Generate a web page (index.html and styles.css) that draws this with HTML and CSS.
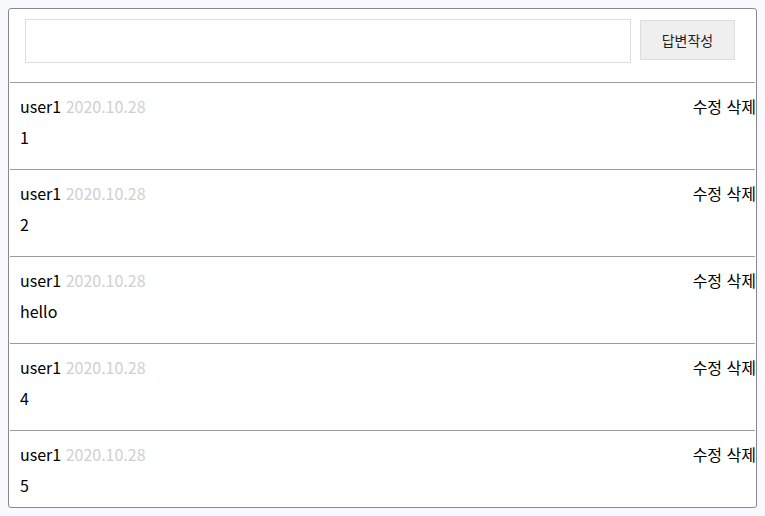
FILE: index.html
```html
<!DOCTYPE html>
<html lang="ko">
<head>
<meta charset="utf-8">
<title>댓글</title>
<link rel="stylesheet" href="styles.css">
</head>
<body>
<div class="board">
  <div class="write">
    <input class="write-input" type="text">
    <button class="write-btn" type="button">답변작성</button>
  </div>
  <div class="divider"></div>
  <div class="reply">
    <div class="reply-head">
      <div class="reply-meta"><span class="reply-user">user1</span> <span class="reply-date">2020.10.28</span></div>
      <div class="reply-actions">수정 삭제</div>
    </div>
    <div class="reply-body">1</div>
  </div>
  <div class="divider"></div>
  <div class="reply">
    <div class="reply-head">
      <div class="reply-meta"><span class="reply-user">user1</span> <span class="reply-date">2020.10.28</span></div>
      <div class="reply-actions">수정 삭제</div>
    </div>
    <div class="reply-body">2</div>
  </div>
  <div class="divider"></div>
  <div class="reply">
    <div class="reply-head">
      <div class="reply-meta"><span class="reply-user">user1</span> <span class="reply-date">2020.10.28</span></div>
      <div class="reply-actions">수정 삭제</div>
    </div>
    <div class="reply-body">hello</div>
  </div>
  <div class="divider"></div>
  <div class="reply">
    <div class="reply-head">
      <div class="reply-meta"><span class="reply-user">user1</span> <span class="reply-date">2020.10.28</span></div>
      <div class="reply-actions">수정 삭제</div>
    </div>
    <div class="reply-body">4</div>
  </div>
  <div class="divider"></div>
  <div class="reply">
    <div class="reply-head">
      <div class="reply-meta"><span class="reply-user">user1</span> <span class="reply-date">2020.10.28</span></div>
      <div class="reply-actions">수정 삭제</div>
    </div>
    <div class="reply-body">5</div>
  </div>
</div>
</body>
</html>
```

FILE: styles.css
```css
html, body {
  background: #f8f9fd;
}
body {
  margin: 8px;
  font-family: "Noto Sans CJK KR", "Noto Sans", sans-serif;
  font-size: 16px;
  color: #000;
}
.board {
  box-sizing: border-box;
  height: 500px;
  overflow: hidden;
  background: #fff;
  border: 1px solid #888;
  border-radius: 3px;
}
.write {
  box-sizing: border-box;
  height: 73px;
  display: flex;
  align-items: flex-start;
  gap: 9px;
  padding: 10px 21px 0 16px;
}
.write-input {
  flex: 1;
  box-sizing: border-box;
  height: 44px;
  margin: 0;
  border: 1px solid #ddd;
  background: #fff;
  outline: none;
}
.write-btn {
  box-sizing: border-box;
  width: 95px;
  height: 40px;
  margin: 1px 0 0;
  padding: 0;
  border: 1px solid #ddd;
  background: #efefef;
  font-family: "Noto Sans CJK KR", sans-serif;
  font-size: 14px;
  color: #222;
}
.divider {
  height: 1px;
  margin: 0 1px;
  background: #9b9b9b;
}
.reply {
  box-sizing: border-box;
  height: 86px;
  padding: 11px 0 0 11px;
}
.reply-head {
  display: flex;
  justify-content: space-between;
  line-height: 24px;
}
.reply-date {
  color: #d0d0d0;
}
.reply-body {
  margin-top: 7px;
  line-height: 24px;
}
```
